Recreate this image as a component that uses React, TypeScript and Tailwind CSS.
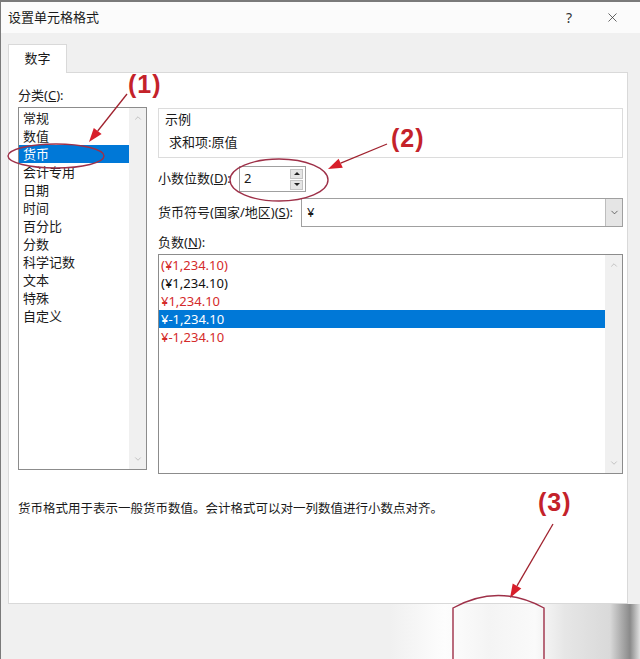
import React from 'react'
import { X, ChevronUp, ChevronDown } from 'lucide-react'

const categories = ['常规', '数值', '货币', '会计专用', '日期', '时间', '百分比', '分数', '科学记数', '文本', '特殊', '自定义']

const negatives = [
  { text: '(¥1,234.10)', red: true },
  { text: '(¥1,234.10)', red: false },
  { text: '¥1,234.10', red: true },
  { text: '¥-1,234.10', red: false, selected: true },
  { text: '¥-1,234.10', red: true }
]

const font = "font-['Noto_Sans','Noto_Sans_CJK_SC',sans-serif]"

const ScrollTrack: React.FC = () => (
  <div className="w-[17px] h-full bg-[#f0f0f0] flex flex-col items-center justify-between py-[5px]">
    <ChevronUp className="w-[10px] h-[10px] text-[#a6a6a6]" strokeWidth={1.5} />
    <ChevronDown className="w-[10px] h-[10px] text-[#a6a6a6]" strokeWidth={1.5} />
  </div>
)

const App: React.FC = () => {
  return (
    <div className={`relative w-[640px] h-[659px] bg-[#f0f0f0] border-l border-t-2 border-[#7a7a7a] flex flex-col overflow-hidden text-[#1a1a1a] ${font}`}>
      {/* Title bar */}
      <div className="h-[31px] bg-[#fbfbfb] flex items-center justify-between pl-[7px] pr-[20px] shrink-0">
        <span className="text-[13px] leading-none">设置单元格格式</span>
        <div className="flex items-center gap-[33px]">
          <span className="text-[14px] leading-none text-[#333]">?</span>
          <X className="w-[15px] h-[15px] text-[#333]" strokeWidth={1.2} />
        </div>
      </div>

      {/* Tabs */}
      <div className="h-[39px] flex items-end pl-[7px] shrink-0">
        <div className="w-[59px] h-[29px] bg-white border border-b-0 border-[#d9d9d9] flex items-center justify-center -mb-px relative z-10">
          <span className="text-[13px]">数字</span>
        </div>
      </div>

      {/* Panel */}
      <div className="mx-[7px] mr-[12px] h-[532px] bg-white border border-[#d9d9d9] flex flex-col pl-[9px] shrink-0">
        <div className="flex pt-[14px] gap-[11px]">
          {/* Left column */}
          <div className="w-[129px] flex flex-col">
            <div className="h-[16px] text-[13px] leading-[16px]">分类(<span className="underline">C</span>):</div>
            <div className="mt-[4px] h-[363px] border border-[#8c8c8c] flex">
              <div className="flex-1 pt-[1px]">
                {categories.map((c) => (
                  <div
                    key={c}
                    className={`h-[18px] leading-[18px] text-[13px] pl-[4px] ${c === '货币' ? 'bg-[#0078d7] text-white' : ''}`}
                  >
                    {c}
                  </div>
                ))}
              </div>
              <ScrollTrack />
            </div>
          </div>

          {/* Right column */}
          <div className="w-[465px] flex flex-col pt-[21px]">
            <div className="h-[50px] border border-[#dcdcdc] pl-[6px] pt-[2px]">
              <div className="text-[13px] leading-[16px]">示例</div>
              <div className="text-[13px] leading-[16px] mt-[7px] pl-[4px]">求和项:原值</div>
            </div>

            <div className="mt-[8px] h-[26px] flex items-center">
              <span className="w-[81px] text-[13px]">小数位数(<span className="underline">D</span>):</span>
              <div className="w-[67px] h-[26px] border border-[#a0a0a0] flex items-center justify-between pl-[4px] pr-[2px]">
                <span className="text-[13px]">2</span>
                <div className="flex flex-col gap-[1px]">
                  <div className="w-[13px] h-[10px] bg-[#e5e5e5] border border-[#c4c4c4] flex items-center justify-center">
                    <div className="w-0 h-0 border-l-[3px] border-r-[3px] border-b-[3px] border-l-transparent border-r-transparent border-b-[#222]" />
                  </div>
                  <div className="w-[13px] h-[10px] bg-[#e5e5e5] border border-[#c4c4c4] flex items-center justify-center">
                    <div className="w-0 h-0 border-l-[3px] border-r-[3px] border-t-[3px] border-l-transparent border-r-transparent border-t-[#222]" />
                  </div>
                </div>
              </div>
            </div>

            <div className="mt-[6px] h-[29px] flex items-center">
              <span className="w-[143px] text-[13px] whitespace-nowrap">货币符号(国家/地区)(<span className="underline">S</span>):</span>
              <div className="flex-1 h-[29px] border border-[#a0a0a0] flex items-center justify-between pl-[5px]">
                <span className="text-[13px]">¥</span>
                <div className="w-[17px] h-full bg-[#e5e5e5] border-l border-[#bdbdbd] flex items-center justify-center">
                  <ChevronDown className="w-[11px] h-[11px] text-[#333]" strokeWidth={1.5} />
                </div>
              </div>
            </div>

            <div className="mt-[7px] h-[16px] text-[13px] leading-[16px]">负数(<span className="underline">N</span>):</div>
            <div className="mt-[4px] h-[220px] border border-[#8c8c8c] flex">
              <div className="flex-1 pt-[1px]">
                {negatives.map((n, i) => (
                  <div
                    key={i}
                    className={`h-[18px] leading-[18px] text-[13px] pl-[2px] ${
                      n.selected ? 'bg-[#0078d7] text-white' : n.red ? 'text-[#d42a2a]' : 'text-[#111]'
                    }`}
                  >
                    {n.text}
                  </div>
                ))}
              </div>
              <ScrollTrack />
            </div>
          </div>
        </div>

        <div className="mt-[27px] text-[12.5px] leading-[16px]">货币格式用于表示一般货币数值。会计格式可以对一列数值进行小数点对齐。</div>
      </div>

      {/* Bottom button area (blurred) */}
      <div className="flex-1 flex">
        <div className="flex-1" />
        <div className="w-[250px] bg-[linear-gradient(90deg,#f0f0f0_0%,#fdfdfd_22%,#f4f4f4_40%,#fafafa_58%,#e6e6e6_70%,#d9d9d9_88%,#8a8a8a_96%,#e0e0e0_100%)]" />
      </div>

      {/* Annotations */}
      <span className="absolute left-[127px] top-[64px] text-[25px] font-bold text-[#c4222a] font-['Liberation_Sans',sans-serif] tracking-[1px]">(1)</span>
      <span className="absolute left-[390px] top-[118px] text-[25px] font-bold text-[#c4222a] font-['Liberation_Sans',sans-serif] tracking-[1px]">(2)</span>
      <span className="absolute left-[537px] top-[482px] text-[25px] font-bold text-[#c4222a] font-['Liberation_Sans',sans-serif] tracking-[1px]">(3)</span>

      <svg className="absolute inset-0 pointer-events-none" width="640" height="659" viewBox="0 0 640 659">
        <ellipse cx="55" cy="154" rx="48" ry="12" fill="none" stroke="#9e3048" strokeWidth="1.4" />
        <ellipse cx="278" cy="178" rx="49" ry="21" fill="none" stroke="#9e3048" strokeWidth="1.4" />

        <line x1="126" y1="92" x2="96.7" y2="129" stroke="#a0222e" strokeWidth="1.3" />
        <polygon points="88,140 100.6,132.1 92.8,125.9" fill="#d81e2a" />

        <line x1="386" y1="142" x2="339.7" y2="161.2" stroke="#a0222e" strokeWidth="1.3" />
        <polygon points="327,167 341.8,165.7 337.6,156.7" fill="#d81e2a" />

        <line x1="552" y1="522" x2="516" y2="583.9" stroke="#a0222e" strokeWidth="1.3" />
        <polygon points="509,596 520.3,586.4 511.7,581.4" fill="#d81e2a" />

        <path d="M452,659 L452,606 Q497,581 543,606 L543,659" fill="none" stroke="#9e3048" strokeWidth="1.4" />
      </svg>
    </div>
  )
}

export default App
